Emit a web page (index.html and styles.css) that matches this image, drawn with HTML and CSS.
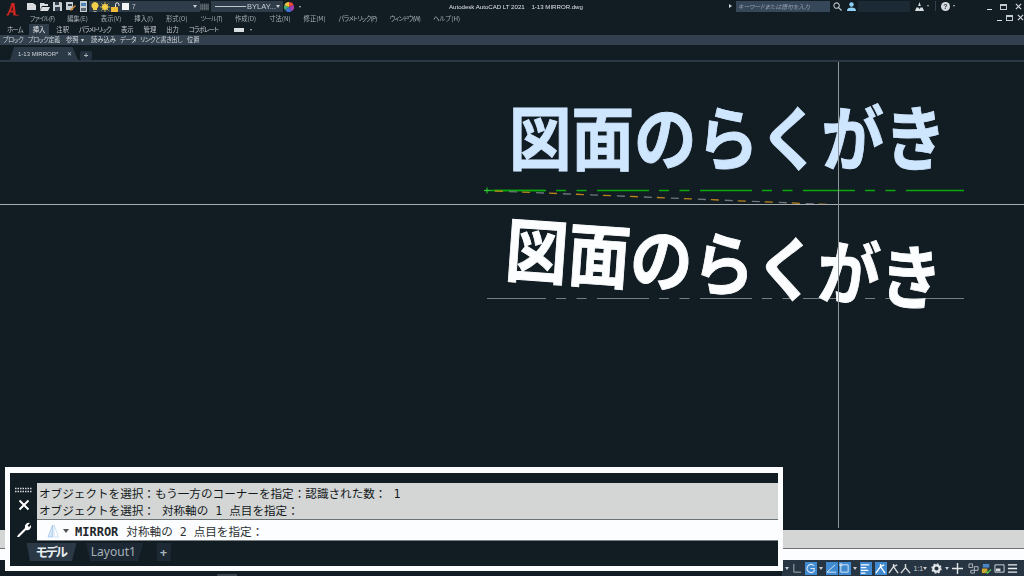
FILE: index.html
```html
<!DOCTYPE html>
<html lang="ja">
<head>
<meta charset="utf-8">
<title>Autodesk AutoCAD LT 2021</title>
<link rel="stylesheet" href="styles.css">
</head>
<body>
<div class="app">
  <header class="chrome">
    <div class="toprow">
      <svg class="logo" viewBox="0 0 14 15"><path d="M1 13.500 C4 10 5 5 6.500 1 H9.500 L11 13.500 H8.300 L8 10.500 H5 L3.500 13.500 Z M6 8.500 H7.900 L7.600 4.500 Z" fill="#c8261f" fill-rule="evenodd"/><path d="M10.500 12.500h3v1.500h-3z" fill="#8a1f1d"/></svg>
      <div class="qat">
        <svg class="ic" viewBox="0 0 11 11"><path d="M1 2h6l3 2v5H1z" fill="#d9dde0"/></svg>
        <svg class="ic" viewBox="0 0 11 11"><path d="M1 2h4l1 1h3v2H3L1 9zM3 6h8L9 10H1z" fill="#d9dde0"/></svg>
        <svg class="ic" viewBox="0 0 11 11"><path d="M1 1h8l1 1v8H1z" fill="#c8cdd1"/><path d="M3 1h4v3H3zM3 6h5v4H3z" fill="#33414f"/></svg>
        <svg class="ic" viewBox="0 0 11 11"><path d="M1 1h7v8H1z" fill="#c8cdd1"/><path d="M3 3h4v2H3z" fill="#33414f"/><path d="M5 9l5-5 1 1-5 5z" fill="#d0862b"/></svg>
        <svg class="ic" viewBox="0 0 11 11"><path d="M2 0h7v11H2z" fill="#c8cdd1"/><path d="M3 2h5v3H3z" fill="#4b86b8"/><path d="M3 7h5v3H3z" fill="#5a6873"/></svg>
      </div>
      <div class="combo layer">
        <svg class="lic" viewBox="0 0 10 10"><path d="M5 0a3.500 3.500 0 0 1 2 6.400V8H3V6.400A3.500 3.500 0 0 1 5 0z" fill="#f3cf4a"/><path d="M3.500 9h3v1h-3z" fill="#aaa"/></svg>
        <svg class="lic" viewBox="0 0 10 10"><circle cx="5" cy="5" r="3" fill="#f3cf4a"/><path d="M5 0v10M0 5h10M1.500 1.500l7 7M8.500 1.500l-7 7" stroke="#f3cf4a" stroke-width=".8"/></svg>
        <svg class="lic" viewBox="0 0 10 10"><path d="M1 5h7v5H1z" fill="#f0bc35"/><path d="M5.500 5V2.500a1.700 1.700 0 0 1 3.400 0V4" fill="none" stroke="#f0f0f0"/></svg>
        <span class="swatch"></span>
        <span class="comboval">7</span>
        <span class="caret"></span>
      </div>
      <svg class="grid" viewBox="0 0 10 10"><path d="M1 1v8M3 1v8M5 1v8M7 1v8M9 1v8M0 3h10M0 5h10M0 7h10" stroke="#6f7b85" stroke-width=".8"/></svg>
      <div class="combo ltype">
        <span class="lt-line"></span><span class="bylayer">BYLAY...</span><span class="caret"></span>
      </div>
      <svg class="wheel" viewBox="0 0 10 10"><path d="M5 5V0a5 5 0 0 1 4.700 3.300z" fill="#e8453c"/><path d="M5 5l4.700-1.700A5 5 0 0 1 7.500 9.300z" fill="#a33fb0"/><path d="M5 5l2.500 4.300A5 5 0 0 1 1 8z" fill="#3f6fd0"/><path d="M5 5L1 8A5 5 0 0 1 .3 3.300z" fill="#3fb070"/><path d="M5 5L.3 3.300A5 5 0 0 1 5 0z" fill="#eec23c"/></svg>
      <span class="minicaret pad"></span>
      <div class="title">Autodesk AutoCAD LT 2021&nbsp;&nbsp;&nbsp;&nbsp;1-13 MIRROR.dwg</div>
      <div class="tools">
        <span class="tri"></span>
        <div class="search">キーワードまたは語句を入力</div>
        <svg class="tool" viewBox="0 0 10 10"><circle cx="4" cy="4" r="3" fill="none" stroke="#b9c0c6" stroke-width="1.200"/><path d="M6 6l3.500 3.500" stroke="#b9c0c6" stroke-width="1.400"/></svg>
        <svg class="tool user" viewBox="0 0 10 10"><circle cx="5" cy="2.800" r="2.500" fill="#8fd0f5"/><path d="M0 10c0-3 2-3.800 5-3.800s5 .8 5 3.800z" fill="#8fd0f5"/></svg>
        <div class="userbox"></div>
        <svg class="tool" viewBox="0 0 10 10"><path d="M5 0l1.500 4.500H3.500zM1.500 6h2.500l1 2 1-2h2.500L10 10H0z" fill="#d8dde0"/></svg>
        <span class="minicaret"></span>
        <span class="vsep"></span>
        <span class="help">?</span>
        <span class="minicaret"></span>
      </div>
      <div class="winctl">
        <span class="wmin"></span>
        <span class="wrest"></span>
        <svg class="wx" viewBox="0 0 8 8"><path d="M1 1l6 6M7 1L1 7" stroke="#d8dde0" stroke-width="1.300"/></svg>
      </div>
    </div>
    <nav class="menu">
      <span class="k">ファイル(F)</span><span>編集(E)</span><span>表示(V)</span><span>挿入(I)</span><span>形式(O)</span><span class="k">ツール(T)</span><span>作成(D)</span><span>寸法(N)</span><span>修正(M)</span><span class="k">パラメトリック(P)</span><span class="k">ウィンドウ(W)</span><span>ヘルプ(H)</span>
      <div class="winctl2">
        <span class="wmin"></span>
        <span class="wrest"></span>
        <svg class="wx" viewBox="0 0 8 8"><path d="M1 1l6 6M7 1L1 7" stroke="#d8dde0" stroke-width="1.300"/></svg>
      </div>
    </nav>
    <div class="tabs">
      <span class="k">ホーム</span><span class="on">挿入</span><span>注釈</span><span class="k">パラメトリック</span><span>表示</span><span>管理</span><span>出力</span><span class="k">コラボレート</span>
      <span class="tabpill"></span><span class="minicaret"></span>
    </div>
    <div class="strip">
      <span class="s1">ブロック</span><span class="s2">ブロック定義</span><span class="s3">参照 &nbsp;▾</span><span class="s4">読み込み</span><span class="s5">データ</span><span class="s6">リンクと書き出し</span><span class="s7">位置</span>
    </div>
    <div class="docbar">
      <div class="doctab"><span>1-13 MIRROR*</span><span class="docx">✕</span></div>
      <div class="docplus">+</div>
    </div>
  </header>

  <main class="canvas">
    <svg class="draw" viewBox="0 0 1024 466" width="1024" height="466">
      <g fill="none">
        <path d="M485 128.500H545" stroke="#0da80d" stroke-width="1.300"/>
        <path d="M494 128.500H906" stroke="#0da80d" stroke-width="1.300" stroke-dasharray="52 10 10 10.500 10 10.500"/>
        <path d="M906 128.500H964" stroke="#0da80d" stroke-width="1.300"/>
        <path d="M484 128.500h6M487 125.500v6" stroke="#2fd02f"/>
        <path d="M495 129L830 142.500" stroke="#b8841c" stroke-width="1.300" stroke-dasharray="8 19"/>
        <path d="M509 129.600L830 142.500" stroke="#6f777c" stroke-width="1.300" stroke-dasharray="8 19"/>
        <path d="M487 236.500H545" stroke="#767e83"/>
        <path d="M494 236.500H906" stroke="#767e83" stroke-dasharray="52 10 10 10.500 10 10.500"/>
        <path d="M906 236.500H964" stroke="#767e83"/>
      </g>
    </svg>
    <div class="big blue">図面のらくがき</div>
    <div class="big white">図面のらくがき</div>
    <span class="cross-h"></span>
    <span class="cross-v"></span>
  </main>

  <div class="cmdgray"></div>
  <div class="cmdwhite"></div>
  <footer class="status">
    <span class="spill"></span>
    <div class="sgroup">
      <span class="sc"></span>
      <span class="sb"><svg viewBox="0 0 12 12"><path d="M2 1v9h8" fill="none" stroke="#aeb6bc"/></svg></span>
      <span class="sb on"><svg viewBox="0 0 12 12"><path d="M10 3a4.500 4.500 0 1 0 0 6V6H6" fill="none" stroke="#dfeaf3" stroke-width="1.200"/></svg></span>
      <span class="sc"></span>
      <span class="sb on"><svg viewBox="0 0 12 12"><path d="M1 10L10 2M1 10h10" fill="none" stroke="#dfeaf3"/></svg></span>
      <span class="sb on"><svg viewBox="0 0 12 12"><path d="M2 2h8v8H2zM1 1h2v2H1z" fill="none" stroke="#dfeaf3"/></svg></span>
      <span class="sc"></span>
      <span class="sb on"><svg viewBox="0 0 12 12"><path d="M1 2h9M1 5h6M1 8h8M1 11h5" stroke="#fff" stroke-width="1.500"/></svg></span>
      <span class="sb on m3"><svg viewBox="0 0 12 12"><path d="M6 4L1 11M6 4l5 7M6 4V1M6 4l4-2" fill="none" stroke="#fff" stroke-width="1.500"/></svg></span>
      <span class="sb"><svg viewBox="0 0 12 12"><path d="M6 4L1 11M6 4l5 7M6 4V1M6 4l4-2" fill="none" stroke="#d8dde0" stroke-width="1.500"/></svg></span>
      <span class="sb m0"><svg viewBox="0 0 12 12"><path d="M6 5L1 11M6 5l5 6M6 5V1" fill="none" stroke="#d8dde0" stroke-width="1.500"/></svg></span>
      <span class="ratio">1:1</span>
      <span class="sc tight"></span>
      <span class="sb m1"><svg viewBox="0 0 12 12"><circle cx="6" cy="6" r="3.500" fill="none" stroke="#e4e8ea" stroke-width="2.500"/><circle cx="6" cy="6" r="5" fill="none" stroke="#e4e8ea" stroke-width="1.400" stroke-dasharray="2 1.900"/></svg></span>
      <span class="sc"></span>
      <span class="sb"><svg viewBox="0 0 12 12"><path d="M6 0v12M0 6h12" stroke="#e4e8ea" stroke-width="1.500"/></svg></span>
      <span class="sb m4"><svg viewBox="0 0 12 12"><path d="M1 1h4v4H1zM7 4h4v4H7zM3 8h4v3H3z" fill="none" stroke="#b8c0c6"/></svg></span>
      <span class="sb"><svg viewBox="0 0 12 12"><path d="M2 1h7v4H2z" fill="#4a86c8"/><path d="M1 6h6v5H1z" fill="#d3a42e"/><path d="M5 9l2 2 4-4" fill="none" stroke="#55c04a" stroke-width="1.500"/></svg></span>
      <span class="sb"><svg viewBox="0 0 12 12"><path d="M1 2h10v8H1z" fill="none" stroke="#d8dde0"/><path d="M2 6h5v3H2z" fill="#d8dde0"/></svg></span>
      <span class="sb"><svg viewBox="0 0 12 12"><path d="M1 2h10M1 6h10M1 10h10" stroke="#eef0f2" stroke-width="1.500"/></svg></span>
    </div>
  </footer>

  <section class="cmdbox">
    <div class="cmdside">
      <svg class="grip" viewBox="0 0 19 6"><path d="M1 1.500h17M1 4.500h17" stroke="#d4d8db" stroke-width="1.500" stroke-dasharray="1.500 1"/></svg>
      <svg class="sideic" viewBox="0 0 12 12"><path d="M1.500 1.500l9 9M10.500 1.500l-9 9" stroke="#fff" stroke-width="2"/></svg>
      <svg class="sideic wrench" viewBox="0 0 16 16"><path d="M1 15l1-2 7-7a4 4 0 0 1 5-5l-2.500 2.500L13 5l2-2a4 4 0 0 1-5 5l-7 7z" fill="#fff"/></svg>
    </div>
    <div class="cmdmain">
      <div class="hist">
        <div>オブジェクトを選択：もう一方のコーナーを指定：認識された数： 1</div>
        <div>オブジェクトを選択： 対称軸の 1 点目を指定：</div>
      </div>
      <div class="input">
        <svg class="mir" viewBox="0 0 12 14"><path d="M5.500 1L1 13h4.500z" fill="#d5e6f6" stroke="#9cc3e8" stroke-width=".7"/><path d="M7 1l4.500 12H7z" fill="#fff" stroke="#b8d4ee" stroke-width=".7"/></svg>
        <span class="incaret"></span>
        <b>MIRROR</b><span>対称軸の 2 点目を指定：</span>
      </div>
    </div>
    <div class="layouts">
      <span class="ltab on">モデル</span>
      <span class="ltab">Layout1</span>
      <span class="ltab plus">+</span>
    </div>
  </section>
</div>
</body>
</html>
```

FILE: styles.css
```css
* { box-sizing: border-box; }
html, body { margin: 0; padding: 0; width: 1024px; height: 576px; overflow: hidden; background: #121c23; }
body { font-family: "Noto Sans CJK JP", "Noto Sans", sans-serif; color: #c8ced3; }
.app { width: 1024px; height: 576px; display: flex; flex-direction: column; position: relative; }

.chrome { flex: none; background: #121c23; filter: blur(.35px); }
.toprow { height: 13px; display: flex; align-items: center; position: relative; }
.logo { width: 14px; height: 15px; margin: 5px 0 0 5px; flex: none; }
.qat { display: flex; gap: 2px; margin-left: 7px; }
.ic { width: 11px; height: 11px; display: block; }
.combo { height: 11px; background: #2f3c49; display: flex; align-items: center; flex: none; }
.layer { width: 111px; padding: 0 3px 0 1px; }
.lic { width: 10px; height: 10px; flex: none; }
.swatch { width: 7px; height: 7px; background: #f2f4f5; margin-left: 2px; }
.comboval { font: 6.500px "Liberation Sans", sans-serif; margin-left: 3px; flex: 1; }
.caret { width: 0; height: 0; border: 2.500px solid transparent; border-top: 3px solid #c9ced2; border-bottom: 0; flex: none; }
.grid { width: 9px; height: 10px; flex: none; }
.ltype { width: 72px; margin-left: 2px; padding: 0 3px 0 4px; }
.lt-line { width: 32px; height: 1px; background: #c0c6ca; }
.bylayer { font: 7.500px "Liberation Sans", sans-serif; flex: 1; margin-left: 1px; }
.wheel { width: 10px; height: 10px; margin-left: 1px; flex: none; }
.minicaret { width: 0; height: 0; border: 1.500px solid transparent; border-top: 2.500px solid #b4bbc0; border-bottom: 0; flex: none; margin-left: 3px; }
.pad { margin-left: 5px; }
.title { position: absolute; left: 449px; top: 2px; font: 6.100px/10px "Liberation Sans", sans-serif; color: #dfe3e6; white-space: nowrap; }
.tools { position: absolute; left: 729px; top: 1px; display: flex; align-items: center; height: 10px; }
.tri { width: 0; height: 0; border: 2px solid transparent; border-left: 3px solid #d0d5d8; border-right: 0; margin-right: 4px; }
.search { width: 94px; height: 11px; background: #36475a; font: italic 5.800px/11px "Noto Sans CJK JP", sans-serif; font-feature-settings: "palt"; color: #97a4b0; padding-left: 2px; }
.tool { width: 9px; height: 9px; margin-left: 3px; flex: none; }
.user { margin-left: 5px; }
.userbox { width: 52px; height: 11px; background: #1c2a35; margin: 0 2px; }
.vsep { width: 1px; height: 10px; background: #33414e; margin: 0 5px 0 6px; }
.help { width: 9px; height: 9px; border-radius: 50%; background: #d6dbdf; color: #2b3742; font: bold 7px/9px "Liberation Sans", sans-serif; text-align: center; }
.winctl { position: absolute; left: 987px; top: 3px; display: flex; align-items: center; gap: 8px; }
.wmin { width: 5px; height: 1px; background: #d8dde0; margin-top: 6px; }
.wrest { width: 7px; height: 6px; border: 1px solid #c3c9cd; border-top-width: 2px; }
.wx { width: 7px; height: 7px; }

.k { letter-spacing: -.75px; }
.menu { height: 11px; display: flex; align-items: center; padding-left: 30px; gap: 13px; font-size: 6.300px; line-height: 11px; font-feature-settings: "palt"; color: #a6aeb5; white-space: nowrap; position: relative; }
.winctl2 { position: absolute; left: 997px; top: 1px; display: flex; align-items: center; gap: 4px; }
.tabs { height: 11px; display: flex; align-items: center; padding-left: 7px; gap: 10px; font-size: 6.300px; line-height: 11px; font-feature-settings: "palt"; color: #c3c9ce; white-space: nowrap; }
.tabs .on { background: #2f3d4a; color: #e8ecef; padding: 0 4px; margin: 0 -3px 0 -4px; }
.tabpill { width: 10px; height: 4px; background: #d8dde0; margin-left: 6px; margin-right: -7px; }
.strip { height: 10px; background: #33414f; display: grid; grid-template-columns: 25px 38px 25px 29px 20px 47px auto; align-items: center; padding-left: 3px; font-size: 6.300px; line-height: 10px; font-feature-settings: "palt"; color: #d3d8dc; white-space: nowrap; }
.s1, .s2, .s5 { letter-spacing: -.5px; }
.s6 { letter-spacing: -.4px; }
.docbar { height: 17px; display: flex; align-items: flex-end; padding-left: 10px; border-bottom: 2px solid #2b3945; }
.doctab { width: 68px; height: 13px; background: #2b3947; clip-path: polygon(6% 0, 92% 0, 100% 100%, 0 100%); display: flex; align-items: center; padding-left: 8px; font: 6px/12px "Liberation Sans", sans-serif; color: #cfd4d8; white-space: nowrap; }
.docx { margin-left: 9px; font-size: 6px; }
.docplus { width: 12px; height: 9px; margin-left: 2px; background: #243240; border-radius: 2px; font: bold 8px/9px "Liberation Sans", sans-serif; text-align: center; color: #aeb5ba; }

.canvas { flex: 1; position: relative; background: #121c23; overflow: hidden; }
.draw { position: absolute; left: 0; top: 0; }
.big { position: absolute; font-family: "Noto Sans CJK JP", sans-serif; font-weight: 700; font-size: 62.500px; line-height: 72px; white-space: nowrap; }
.blue { left: 509px; top: 37px; color: #cfe6ff; -webkit-text-stroke: .8px #cfe6ff; transform: scaleY(1.12); transform-origin: 0 50%; }
.white { left: 506px; top: 147px; color: #fbfdfe; -webkit-text-stroke: .8px #fbfdfe; transform: rotate(4deg) scaleY(1.12); transform-origin: 0 50%; }
.cross-h { position: absolute; left: 0; right: 0; top: 142px; height: 1px; background: #a7acaf; }
.cross-v { position: absolute; left: 838px; top: 0; bottom: 0; width: 1px; background: #8f9699; }

.cmdgray { flex: none; height: 19px; margin-top: 2px; background: #d3d6d5; border-bottom: 1px solid #6c7377; }
.cmdwhite { flex: none; height: 11px; background: #fbfdfe; }
.status { flex: none; height: 16px; display: flex; align-items: center; justify-content: space-between; background: #121c23; }
.spill { width: 20px; height: 2px; margin: 14px 0 0 217px; background: #3a444d; }
.sgroup { width: 242px; height: 16px; background: #273441; display: flex; align-items: center; padding-left: .5px; }
.sb { width: 12px; height: 13px; margin-left: 1px; display: flex; align-items: center; justify-content: center; flex: none; }
.sb svg { width: 11px; height: 11px; }
.sb.on { background: #3f8ad0; }
.sc { width: 0; height: 0; border: 2.500px solid transparent; border-top: 3px solid #c9ced2; border-bottom: 0; flex: none; margin: 0 2.500px; }
.sc + .sb { margin-left: 0; }
.sc + .sb.m1 { margin-left: 1px; }
.sc.tight { margin-left: .5px; }
.sb.m0 { margin-left: 0; }
.sb.m3 { margin-left: 3px; }
.sb.m4 { margin-left: 4px; }
.ratio { width: 9px; margin-left: 2px; font: 7px "Liberation Sans", sans-serif; color: #cdd2d6; white-space: nowrap; flex: none; }

.cmdbox { position: absolute; left: 5px; top: 467px; width: 778px; height: 104px; border-style: solid; border-color: #fbfdfe; border-width: 6px 5px 5px; background: #121c23; display: grid; grid-template-columns: 27px 1fr; grid-template-rows: 69px 1fr; }
.cmdside { grid-row: 1; grid-column: 1; padding-top: 14px; display: flex; flex-direction: column; align-items: center; }
.grip { width: 19px; height: 6px; }
.sideic { width: 12px; height: 12px; margin-top: 6px; }
.wrench { width: 16px; height: 16px; margin-top: 11px; }
.cmdmain { grid-row: 1; grid-column: 2; padding-top: 10px; display: flex; flex-direction: column; min-width: 0; }
.hist { height: 37px; background: #d3d6d5; border-bottom: 1px solid #6c7377; padding: 3px 0 0 2px; font: 11.600px/16.500px "DejaVu Sans Mono", "Noto Sans CJK JP", monospace; color: #15191c; white-space: nowrap; }
.input { height: 21px; padding-top: 4px; background: #fbfdfe; display: flex; align-items: center; font: 11.600px/17px "DejaVu Sans Mono", "Noto Sans CJK JP", monospace; color: #2b2f32; white-space: pre; border-bottom: 1px solid #7a7f82; }
.mir { width: 12px; height: 14px; margin: -3px 0 0 10px; flex: none; }
.incaret { width: 0; height: 0; border: 3.500px solid transparent; border-top: 4px solid #4d5357; border-bottom: 0; margin: -3px 6px 0 4px; }
.input b { font-size: 12px; color: #23272a; margin-right: 8px; }
.layouts { grid-row: 2; grid-column: 1 / 3; display: flex; align-items: flex-start; padding: 1px 0 0 12px; gap: 2px; }
.ltab { height: 18px; padding: 0 10px; font: 12px/18px "Noto Sans", sans-serif; color: #a8b1b8; background: #1c2935; clip-path: polygon(8% 0, 96% 0, 88% 100%, 14% 100%); white-space: nowrap; }
.ltab.on { padding: 0 13px 0 14px; color: #e9edf0; background: #2b3947; font-family: "Noto Sans CJK JP", sans-serif; font-weight: 700; font-size: 12.500px; letter-spacing: -2px; font-feature-settings: "palt"; }
.plus { padding: 0 5px; margin-left: 7px; font-weight: 700; font-size: 13px; }
```
